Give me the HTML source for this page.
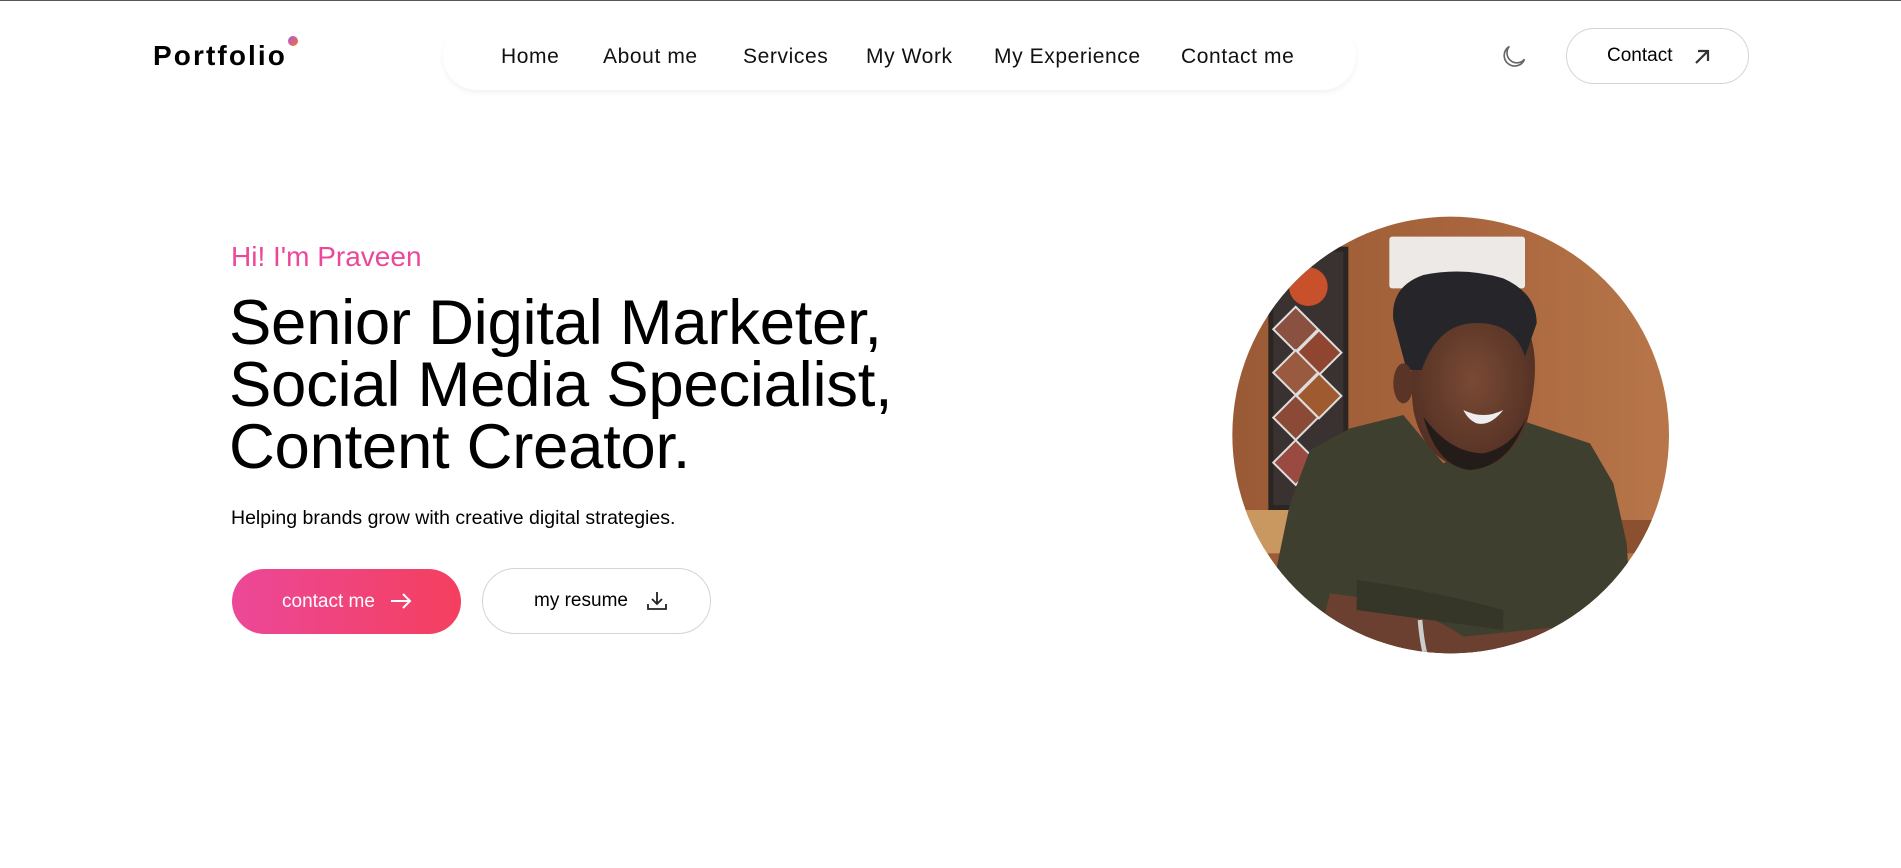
<!DOCTYPE html>
<html><head><meta charset="utf-8"><style>
*{margin:0;padding:0;box-sizing:border-box}
body{width:1901px;height:868px;background:#fff;position:relative;overflow:hidden;font-family:"Liberation Sans",sans-serif;color:#000}
.topline{position:absolute;left:0;top:0;width:1901px;height:1px;background:#555}
.logo{position:absolute;left:153px;top:39px;font-size:28px;font-weight:bold;letter-spacing:2.1px;line-height:34px}
.dot{position:absolute;left:288px;top:36px;width:10px;height:10px;border-radius:50%;background:linear-gradient(135deg,#a855f7,#f97316)}
.nav{position:absolute;left:443px;top:22px;width:913px;height:68px;border-radius:34px;background:#fff;box-shadow:0 3px 6px rgba(0,0,0,0.05)}
.ni{position:absolute;top:45px;font-size:21px;letter-spacing:0.6px;color:#111;line-height:24px;white-space:nowrap}
.moon{position:absolute;left:1500px;top:43px}
.cbtn{position:absolute;left:1566px;top:28px;width:183px;height:56px;border:1px solid #d4d4d8;border-radius:28px;font-size:19px;line-height:54px;padding-left:40px;white-space:nowrap}
.hi{position:absolute;left:231px;top:240px;font-size:28px;color:#ec4899;line-height:34px}
h1{position:absolute;left:229px;top:292px;font-size:63.5px;font-weight:normal;line-height:62px;letter-spacing:-0.3px;white-space:nowrap}
.sub{position:absolute;left:231px;top:507px;font-size:19.5px;line-height:22px;white-space:nowrap}
.b1{position:absolute;left:232px;top:569px;width:229px;height:65px;border-radius:33px;background:linear-gradient(90deg,#ec4899,#f43f5e);color:#fff;font-size:19px;line-height:65px;padding-left:50px}
.b2{position:absolute;left:482px;top:568px;width:229px;height:66px;border-radius:33px;border:1px solid #d4d4d8;font-size:19px;line-height:64px;padding-left:51px}
.photo{position:absolute;left:1230px;top:210px}
</style></head><body>
<div class="topline"></div>
<div class="logo">Portfolio</div><div class="dot"></div>
<div class="nav"></div>
<span class="ni" style="left:501px">Home</span>
<span class="ni" style="left:603px">About me</span>
<span class="ni" style="left:743px">Services</span>
<span class="ni" style="left:866px">My Work</span>
<span class="ni" style="left:994px">My Experience</span>
<span class="ni" style="left:1181px">Contact me</span>
<svg class="moon" width="28" height="28" viewBox="0 0 24 24" fill="none" stroke="#666" stroke-width="1.4"><path d="M8 3a9 9 0 1 0 13 11A8 8 0 0 1 8 3z"/></svg>
<div class="cbtn">Contact <svg style="position:absolute;left:126px;top:19px" width="18" height="18" viewBox="0 0 18 18" fill="none" stroke="#333" stroke-width="2.2"><path d="M3 15L15 3M5 3h10v10"/></svg></div>
<div class="hi">Hi! I'm Praveen</div>
<h1>Senior Digital Marketer,<br>Social Media Specialist,<br>Content Creator.</h1>
<div class="sub">Helping brands grow with creative digital strategies.</div>
<div class="b1">contact me <svg style="position:absolute;left:158px;top:23px" width="22" height="18" viewBox="0 0 22 18" fill="none" stroke="#fff" stroke-width="2"><path d="M1 9h19M13 2l7 7-7 7"/></svg></div>
<div class="b2">my resume <svg style="position:absolute;left:163px;top:21px" width="22" height="22" viewBox="0 0 22 22" fill="none" stroke="#222" stroke-width="1.8"><path d="M11 2v12M6 9l5 5 5-5M2 14v5h18v-5"/></svg></div>
<svg class="photo" width="450" height="450" viewBox="0 0 1350 1350">
<defs>
<clipPath id="c"><circle cx="662" cy="675" r="655"/></clipPath>
<linearGradient id="bg" x1="0" x2="1"><stop offset="0" stop-color="#9a5a35"/><stop offset="0.5" stop-color="#a8653d"/><stop offset="1" stop-color="#b8764a"/></linearGradient>
<radialGradient id="face" cx="0.5" cy="0.45" r="0.6"><stop offset="0" stop-color="#7a4a35"/><stop offset="1" stop-color="#4f2e22"/></radialGradient>
</defs>
<g clip-path="url(#c)">
<rect width="1350" height="1350" fill="url(#bg)"/>
<rect x="115" y="110" width="240" height="790" fill="#2b2523"/>
<rect x="130" y="125" width="210" height="760" fill="#3a3230"/>
<circle cx="235" cy="230" r="58" fill="#c8502a"/>
<g stroke="#ddd" stroke-width="6">
<rect x="150" y="310" width="95" height="95" transform="rotate(45 197 357)" fill="#8a5040"/>
<rect x="220" y="380" width="95" height="95" transform="rotate(45 267 427)" fill="#904530"/>
<rect x="150" y="440" width="95" height="95" transform="rotate(45 197 487)" fill="#9a5a40"/>
<rect x="220" y="510" width="95" height="95" transform="rotate(45 267 557)" fill="#a05a30"/>
<rect x="150" y="575" width="95" height="95" transform="rotate(45 197 622)" fill="#8a4a35"/>
<rect x="150" y="710" width="95" height="95" transform="rotate(45 197 757)" fill="#9a4a40"/>
</g>
<rect x="478" y="80" width="407" height="155" fill="#ece9e6" rx="8"/>
<rect x="0" y="900" width="300" height="130" fill="#c89860"/>
<rect x="1150" y="930" width="200" height="100" fill="#8a5030"/>
<path d="M130 1120 L180 880 L240 720 L360 655 L520 615 L640 760 L870 630 L1080 700 L1150 820 L1190 1000 L1210 1300 L1350 1350 L0 1350 L120 1280Z" fill="#3e3f2f"/>
<path d="M300 1150 Q560 1180 700 1280 L1190 1230 L1280 1350 L250 1350Z" fill="#6b4030"/>
<path d="M380 1110 Q600 1140 820 1200 L820 1260 Q600 1230 380 1200Z" fill="#353628"/>
<path d="M550 600 Q530 430 580 330 L720 290 L890 350 Q940 450 890 640 Q830 780 710 780 Q580 750 550 600Z" fill="url(#face)"/>
<path d="M580 620 Q620 770 720 780 Q840 770 890 620 Q850 710 760 730 Q660 730 580 620Z" fill="#241c18"/>
<path d="M700 600 Q760 630 820 600 Q780 650 740 640 Q715 630 700 600Z" fill="#eee"/>
<path d="M490 330 Q480 230 580 195 Q700 170 820 205 Q920 250 920 340 L885 440 Q850 330 720 340 Q620 350 575 480 L530 480 Z" fill="#26262a"/>
<ellipse cx="520" cy="520" rx="30" ry="60" fill="#5a3426"/>
<path d="M570 1230 Q575 1290 585 1330" stroke="#ccc" stroke-width="14" fill="none"/>
</g>
</svg>
</body></html>
